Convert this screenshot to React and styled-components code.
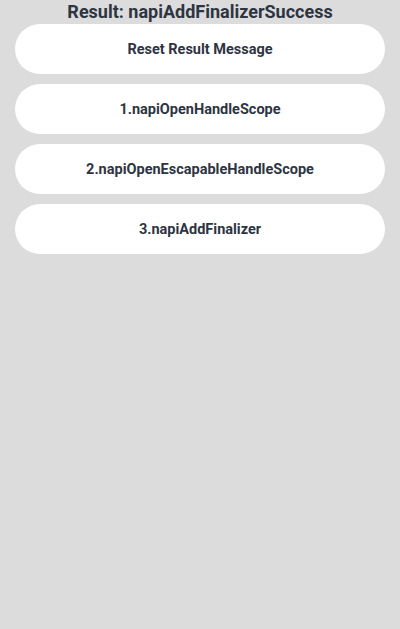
import React from "react";
import styled, { createGlobalStyle } from "styled-components";

const GlobalStyle = createGlobalStyle`
  html, body {
    margin: 0;
    padding: 0;
    background-color: #dcdcdc;
    font-family: "Roboto", "Noto Sans", sans-serif;
  }
`;

const buttons = [
  "Reset Result Message",
  "1.napiOpenHandleScope",
  "2.napiOpenEscapableHandleScope",
  "3.napiAddFinalizer",
];

const App = () => {
  return (
    <>
      <GlobalStyle />
      <Page>
        <Title>Result: napiAddFinalizerSuccess</Title>
        <ButtonList>
          {buttons.map((label) => (
            <ActionButton key={label}>{label}</ActionButton>
          ))}
        </ButtonList>
      </Page>
    </>
  );
};

const Page = styled.div`
  display: flex;
  flex-direction: column;
  align-items: center;
  width: 400px;
  height: 629px;
  background-color: #dcdcdc;
`;

const Title = styled.div`
  height: 24px;
  line-height: 24px;
  font-size: 18px;
  font-weight: 700;
  color: #2e3542;
  text-align: center;
`;

const ButtonList = styled.div`
  display: flex;
  flex-direction: column;
  gap: 10px;
  width: 370px;
`;

const ActionButton = styled.button`
  height: 50px;
  border: none;
  border-radius: 25px;
  background-color: #ffffff;
  color: #2e3542;
  font-family: "Roboto", "Noto Sans", sans-serif;
  font-size: 14.5px;
  font-weight: 700;
  cursor: pointer;
`;

export default App;
